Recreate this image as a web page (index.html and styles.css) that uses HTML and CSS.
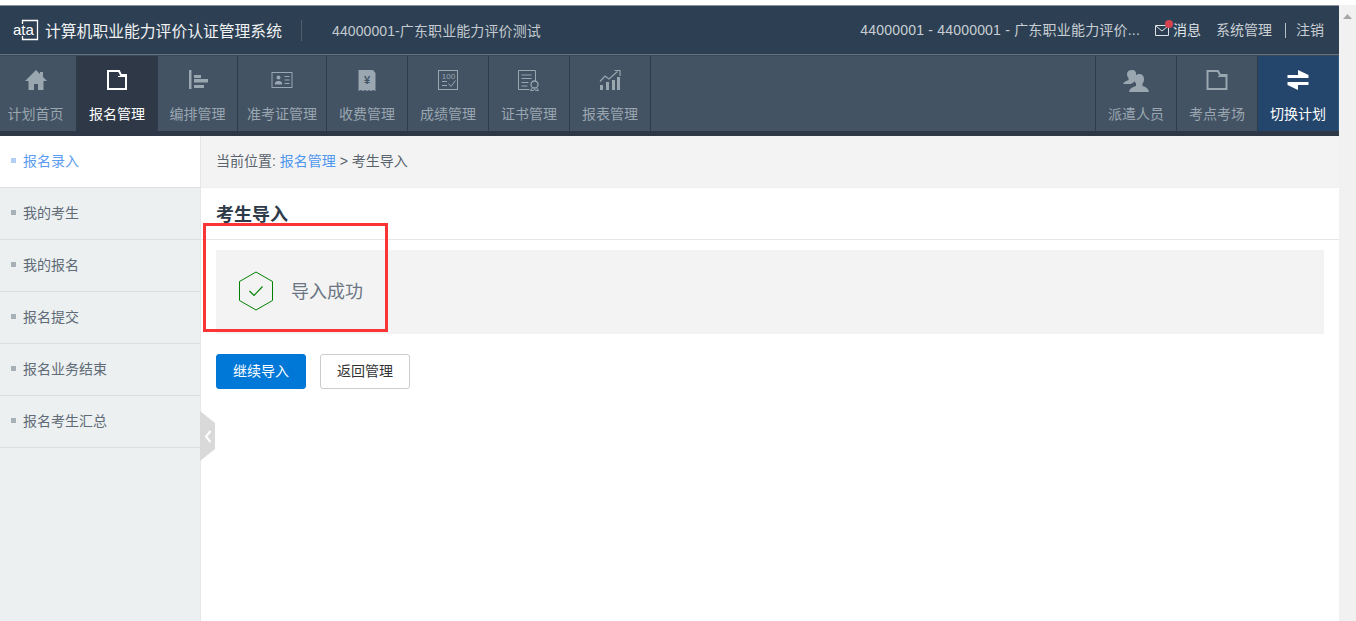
FILE: index.html
```html
<!DOCTYPE html>
<html lang="zh-CN">
<head>
<meta charset="utf-8">
<title>考生导入</title>
<link rel="stylesheet" href="styles.css">
</head>
<body>
<div class="page">
  <div class="viewport">
    <header class="top">
      <div class="brand">
        <svg class="logo" width="26" height="22" viewBox="0 0 26 22"><path d="M9.500 5V1.500H24.500V20.500H9.500V17" fill="none" stroke="#fff" stroke-width="1.300"/><text x="0" y="16" class="logotext">ata</text></svg>
        <span class="sysname">计算机职业能力评价认证管理系统</span>
      </div>
      <span class="plan">44000001-广东职业能力评价测试</span>
      <div class="userbar">
        <span class="org">44000001 - 44000001 - 广东职业能力评价...</span>
        <span class="msg"><svg width="14" height="11" viewBox="0 0 14 11"><path d="M.5 .5h13v10H.5zM1 1l6 5 6-5" fill="none" stroke="#dfe3e6"/></svg><i class="dot"></i>消息</span>
        <span class="ulink">系统管理</span>
        <span class="logout">注销</span>
      </div>
    </header>
    <nav class="nav">
      <a class="item first"><svg width="24" height="24" viewBox="0 0 24 24"><path d="M12 2 1 13h3.500v9H10v-6h4v6h5.500v-9H23l-4-4V4h-3v2z" fill="#9aa6b0"/></svg><span>计划首页</span></a>
      <a class="item on"><svg width="24" height="24" viewBox="0 0 24 24"><path d="M3 3h11l2 4h5v14H3z" fill="none" stroke="#fff" stroke-width="2"/><path d="M13 8.500h8" stroke="#fff"/></svg><span>报名管理</span></a>
      <a class="item narrow"><svg width="24" height="24" viewBox="0 0 24 24"><path d="M3 2h2.500v19H3z" fill="#9aa6b0"/><path d="M8 7h7v3H8zM8 11h14v3.500H8zM8 17h10v3H8z" fill="#9aa6b0"/></svg><span>编排管理</span></a>
      <a class="item wide"><svg width="24" height="24" viewBox="0 0 24 24"><rect x="2" y="4.500" width="20" height="15" fill="none" stroke="#9aa6b0"/><circle cx="8.500" cy="9.500" r="2" fill="#9aa6b0"/><path d="M5 16.500v-2l2-1.500h3l2 1.500v2z" fill="#9aa6b0"/><path d="M14.500 8.500H19.500M14.500 12H19.500M14.500 15.500H19.500" stroke="#9aa6b0"/></svg><span>准考证管理</span></a>
      <a class="item"><svg width="24" height="24" viewBox="0 0 24 24"><path d="M3.500 2H18l2.500 3v18l-2.500-1-2 1-2-1-2 1-2-1-2 1-2-1-2.500 1z" fill="#9aa6b0"/><text x="12" y="15.500" class="yen">¥</text></svg><span>收费管理</span></a>
      <a class="item"><svg width="24" height="24" viewBox="0 0 24 24"><rect x="2.500" y="2.500" width="19" height="19" fill="none" stroke="#9aa6b0"/><text x="12.500" y="10.500" class="score">100</text><path d="M6 13.500h5M6 17.500h5M12.500 15.500l2.500 3 4.500-6" fill="none" stroke="#9aa6b0"/></svg><span>成绩管理</span></a>
      <a class="item"><svg width="24" height="24" viewBox="0 0 24 24"><path d="M18.500 13V2.500H1.500v19h11M4.500 7h10M4.500 10.500h10M4.500 14.500h7M4.500 18h6" fill="none" stroke="#9aa6b0"/><circle cx="17.500" cy="16.500" r="3.500" fill="none" stroke="#9aa6b0" stroke-width="1.300"/><path d="M15.500 19.500 13.500 22.500h3l1-1.500 1 1.500h3l-2-3" fill="none" stroke="#9aa6b0"/></svg><span>证书管理</span></a>
      <a class="item"><svg width="24" height="24" viewBox="0 0 24 24"><path d="M2 17h3v5H2zM8 14h3v8H8zM14 12h3v10h-3zM19 9h3v13h-3z" fill="#9aa6b0"/><path d="M2 13.500 7 8l4 3 8.500-7.500" fill="none" stroke="#9aa6b0" stroke-width="1.200"/><path d="M16.500 2.500H22V8" fill="none" stroke="#9aa6b0" stroke-width="1.200"/></svg><span>报表管理</span></a>
      <div class="spring"></div>
      <a class="item left"><svg width="26" height="24" viewBox="0 0 26 24"><path d="M9 2c3 0 4.500 2 4 5v4.500c-2 3-4 4-5.500 4.500H0c1-2.500 3.500-3 5.500-4V10c-1-1-1.500-2.500-1.500-4C4 3.500 6 2 9 2z" fill="#9aa6b0"/><path d="M16.500 6c3 0 4.500 2 4.500 5 0 2-.5 3.500-1.500 4.500v2.500c3 1 5.500 1.500 6.500 6H6c1-4.500 4-5 7-6v-2.500c-1-1-1.500-2.500-1.500-4.500 0-3 2-5 5-5z" fill="#9aa6b0"/></svg><span>派遣人员</span></a>
      <a class="item"><svg width="24" height="24" viewBox="0 0 24 24"><path d="M2.500 3H13l2 4h6.500v14h-19z" fill="none" stroke="#9aa6b0" stroke-width="2"/><path d="M13 8.500h8" stroke="#9aa6b0"/></svg><span>考点考场</span></a>
      <a class="item switch"><svg width="24" height="24" viewBox="0 0 24 24"><path d="M1.500 7h21v3h-21z" fill="#fff"/><path d="M12 2l10.500 5H12z" fill="#fff"/><path d="M1.500 14h21v3h-21z" fill="#fff"/><path d="M12 22 1.500 17H12z" fill="#fff"/></svg><span>切换计划</span></a>
    </nav>
    <div class="body">
      <aside class="side">
        <a class="sitem cur">报名录入</a>
        <a class="sitem">我的考生</a>
        <a class="sitem">我的报名</a>
        <a class="sitem">报名提交</a>
        <a class="sitem">报名业务结束</a>
        <a class="sitem">报名考生汇总</a>
      </aside>
      <main class="main">
        <div class="crumb">当前位置: <a>报名管理</a> &gt; 考生导入</div>
        <h1 class="title">考生导入</h1>
        <div class="result">
          <svg width="36" height="40" viewBox="0 0 36 40"><path d="M18 1 34.500 10.500V29.500L18 39 1.500 29.500V10.500z" fill="none" stroke="#008000"/><path d="M11.500 20 16 24.500 24.500 15.500" fill="none" stroke="#008000" stroke-width="1.200"/></svg>
          <span class="result-text">导入成功</span>
        </div>
        <div class="actions">
          <button class="btn primary">继续导入</button>
          <button class="btn">返回管理</button>
        </div>
        <i class="marker"></i>
        <div class="toggle"><svg width="8" height="13" viewBox="0 0 8 13"><path d="M6.500 1 2 6.500 6.500 12" fill="none" stroke="#fff" stroke-width="2"/></svg></div>
      </main>
    </div>
  </div>
  <div class="scrollbar"><svg width="9" height="5" viewBox="0 0 9 5"><path d="M4.500 0 9 5H0z" fill="#a8a8a8"/></svg></div>
</div>
</body>
</html>
```
FILE: styles.css
```css
* { box-sizing: border-box; }
html, body { margin: 0; height: 100%; overflow: hidden; }
body { background: #fff; font-family: "Liberation Sans", "Noto Sans CJK SC", sans-serif; font-size: 14px; color: #555; }
.page { display: flex; height: 621px; padding-top: 5px; }
.viewport { width: 1339px; display: flex; flex-direction: column; border-top: 1px solid #8d949b; }
.scrollbar { width: 17px; background: #f1f1f1; display: flex; justify-content: center; padding-top: 9px; align-items: flex-start; }
.top { height: 49px; flex: none; background: #2d4053; display: flex; align-items: center; padding: 0 15px 0 13px; color: #d5dade; border-bottom: 1px solid #66727e; }
.brand { display: flex; align-items: center; gap: 6px; width: 289px; border-right: 1px solid #4f5f6e; height: 21px; }
.logotext { font: 400 15px "Liberation Sans", sans-serif; fill: #fff; }
.sysname { font-size: 15.8px; color: #f0f2f4; white-space: nowrap; }
.plan { margin-left: 30px; font-size: 14px; color: #c4cad0; letter-spacing: .1px; }
.userbar { margin-left: auto; display: flex; align-items: center; font-size: 14px; line-height: 20px; color: #c9ced3; }
.org { margin-right: 15px; letter-spacing: .2px; }
.msg { display: flex; align-items: center; gap: 4px; margin-right: 15px; position: relative; color: #dfe3e6; }
.dot { position: absolute; left: 10px; top: 0; width: 8px; height: 8px; border-radius: 50%; background: #d4434f; }
.ulink { padding-right: 13px; border-right: 1px solid #b7bec4; line-height: 15px; margin-right: 10px; }
.nav { height: 81px; background: #435364; border-top: 1px solid #3a4a5a; border-bottom: 5px solid #2d3745; display: flex; flex: none; }
.item { width: 81px; height: 75px; display: flex; flex-direction: column; align-items: center; padding-top: 12px; gap: 12px; font-size: 14px; line-height: 20px; color: #9aa6b0; border-right: 1px solid #2e3b49; flex: none; }
.item.first { width: 77px; padding-right: 5px; }
.item.narrow { width: 80px; }
.item.wide { width: 89px; }
.item.on { background: #2e3846; color: #fff; }
.item.left { width: 82px; border-left: 1px solid #2e3b49; }
.item.switch { background: #24466c; color: #fff; border-right-color: #33587e; }
.item span { white-space: nowrap; }
.spring { flex: 1; }
.yen { font: 700 11px "Liberation Sans", sans-serif; text-anchor: middle; fill: #435364; }
.score { font: 400 8px "Liberation Sans", sans-serif; text-anchor: middle; fill: #9aa6b0; }
.body { flex: 1; display: flex; min-height: 0; }
.side { width: 201px; background: #ecf0f1; border-right: 1px solid #e4e6e8; flex: none; }
.sitem { display: flex; align-items: center; height: 52px; padding: 0 0 4px 23px; border-bottom: 1px solid #dcdfe1; color: #5f6b76; font-size: 14px; position: relative; }
.sitem::before { content: ""; position: absolute; left: 11px; top: 22px; width: 5px; height: 5px; background: #a8b0b7; }
.sitem.cur { background: #fff; color: #5b9cf0; }
.sitem.cur::before { background: #b3cff3; }
.main { flex: 1; position: relative; min-width: 0; }
.crumb { height: 52px; background: #f3f3f3; padding-left: 15px; line-height: 50px; font-size: 14px; color: #59636d; border-bottom: 1px solid #eee; }
.crumb a { color: #4e97ee; }
.title { margin: 0; height: 52px; padding: 15px 0 0 15px; font-size: 18px; line-height: 24px; color: #2d3a48; font-weight: 700; border-bottom: 1px solid #e6e6e6; }
.result { margin: 10px 15px 0; height: 84px; background: #f3f3f3; display: flex; align-items: center; padding: 0 0 3px 22px; gap: 17px; font-size: 18px; color: #6b7682; }
.result-text { margin-top: -2px; }
.actions { margin: 20px 15px 0; display: flex; gap: 14px; }
.btn { width: 90px; height: 35px; border: 1px solid #ccc; border-radius: 3px; background: #fff; color: #333; font: 14px "Liberation Sans", "Noto Sans CJK SC", sans-serif; padding: 0 0 3px; }
.btn.primary { background: #0078d7; border-color: #0078d7; color: #fff; }
.marker { position: absolute; left: 2px; top: 87px; width: 185px; height: 109px; border: 3px solid #fb3535; }
.toggle { position: absolute; left: -1px; top: 275px; width: 15px; height: 50px; background: #d9d9d9; clip-path: polygon(0 0, 100% 24%, 100% 76%, 0 100%); display: flex; align-items: center; justify-content: center; }
```
